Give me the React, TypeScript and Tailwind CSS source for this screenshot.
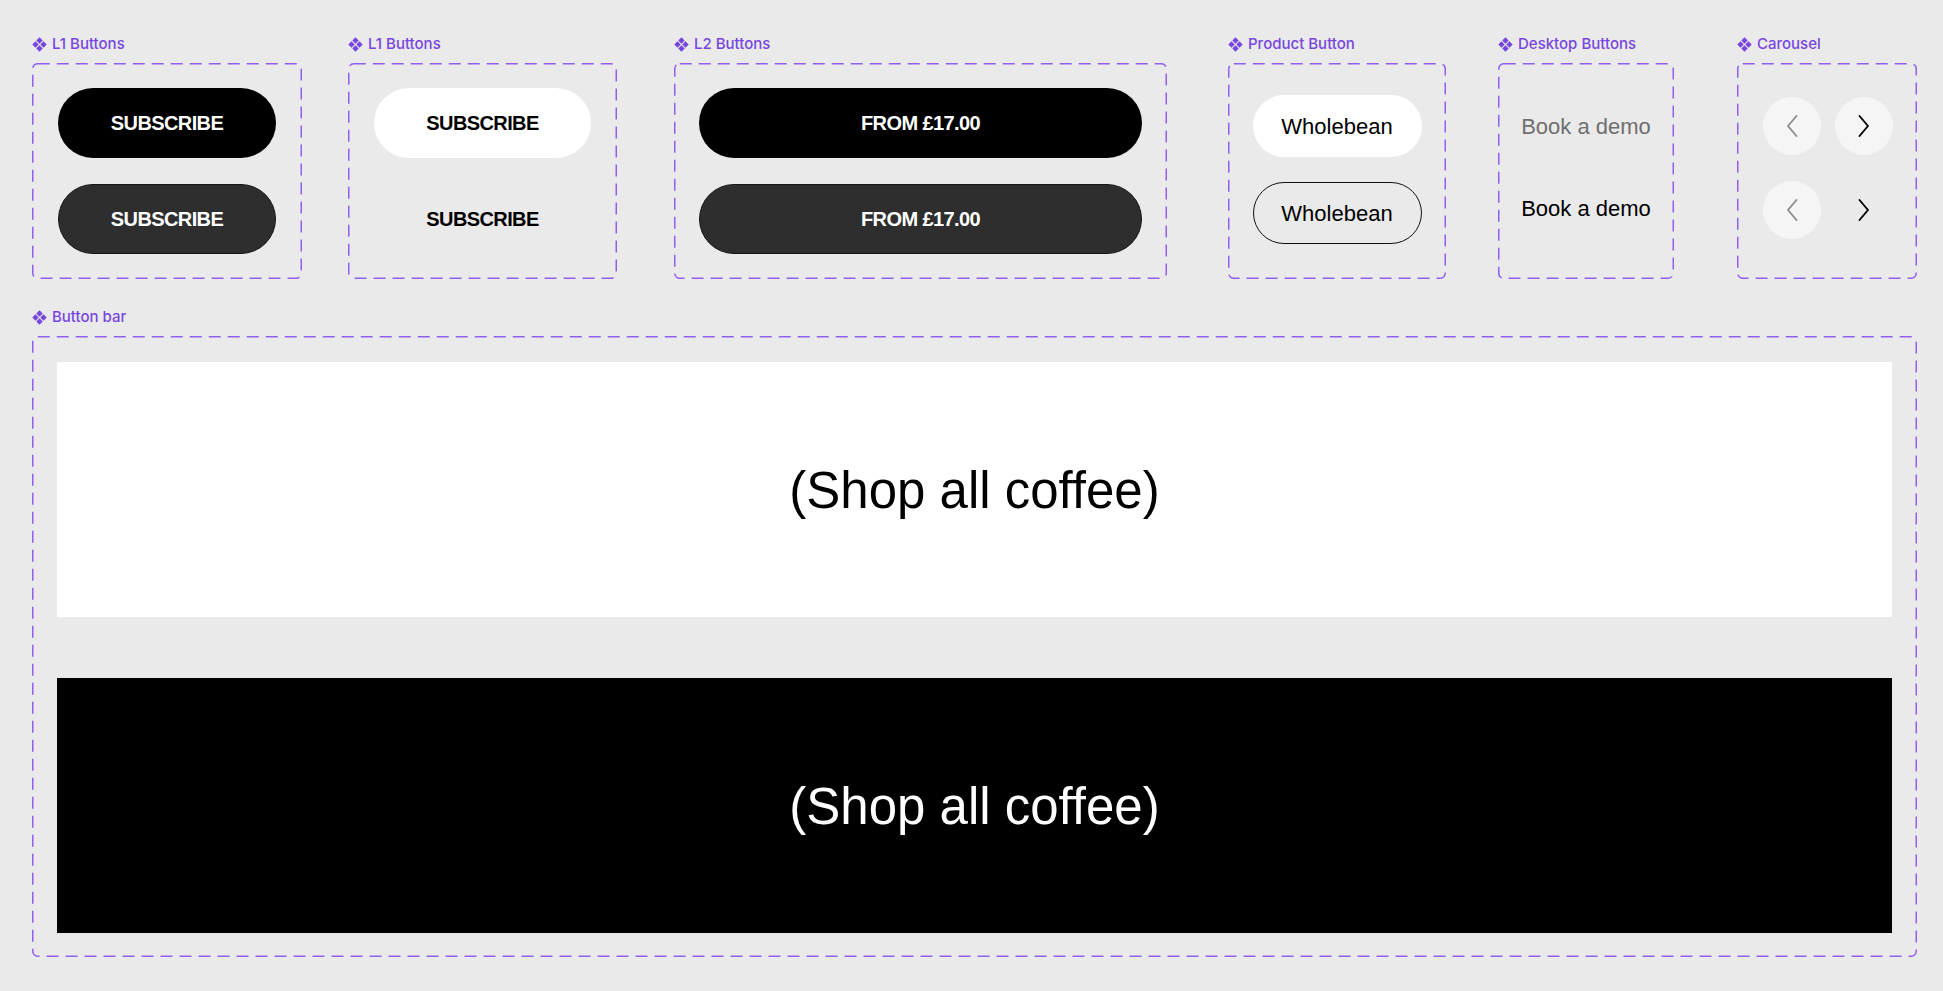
import type { ReactNode } from 'react'
import clsx from 'clsx'

const sans = "font-['Liberation_Sans',Arial,sans-serif]"

// figma-style component marker: four small diamonds
const ComponentIcon = () => (
  <svg width="15" height="15" viewBox="0 0 15 15" fill="currentColor" aria-hidden>
    <path d="M7.5 0.3 L10.7 3.5 L7.5 6.7 L4.3 3.5 Z" />
    <path d="M3.5 4.3 L6.7 7.5 L3.5 10.7 L0.3 7.5 Z" />
    <path d="M11.5 4.3 L14.7 7.5 L11.5 10.7 L8.3 7.5 Z" />
    <path d="M7.5 8.3 L10.7 11.5 L7.5 14.7 L4.3 11.5 Z" />
  </svg>
)

const Label = ({ children }: { children: ReactNode }) => (
  <div className="mb-[11px] flex h-4 items-center gap-[5px] font-['Inter',sans-serif] text-[15px] leading-4 font-medium text-[#7746e0]">
    <ComponentIcon />
    <span>{children}</span>
  </div>
)

const Frame = ({ className, children }: { className?: string; children: ReactNode }) => (
  <div className={clsx('relative', className)}>
    <svg className="pointer-events-none absolute inset-0 h-full w-full" aria-hidden>
      <rect
        x="0.75"
        y="0.75"
        rx="5"
        fill="none"
        stroke="#8f5ff0"
        strokeWidth="1.5"
        strokeDasharray="12 7"
        className="h-[calc(100%-1.5px)] w-[calc(100%-1.5px)]"
      />
    </svg>
    {children}
  </div>
)

const Chevron = ({ dir, className }: { dir: 'left' | 'right'; className?: string }) => (
  <svg width="14" height="24" viewBox="0 0 14 24" fill="none" stroke="currentColor" strokeWidth="1.9" strokeLinecap="round" strokeLinejoin="round" className={className} aria-hidden>
    {dir === 'left' ? <path d="M11.5 2 L3 12 L11.5 22" /> : <path d="M2.5 2 L11 12 L2.5 22" />}
  </svg>
)

const Group = ({ label, className, children }: { label: string; className?: string; children: ReactNode }) => (
  <div className={clsx('flex flex-col', className)}>
    <Label>{label}</Label>
    {children}
  </div>
)

const pill = clsx(sans, 'flex h-[70px] items-center justify-center rounded-full text-[20px] font-bold tracking-[-0.03em]')

export default function App() {
  return (
    <div className="min-h-screen bg-[#eaeaea] pt-[36px] pl-[32px]">
      {/* top row of component sets */}
      <div className="flex items-start">
        <Group label="L1 Buttons">
          <Frame className="flex h-[216px] w-[270px] flex-col items-center justify-center gap-[26px]">
            <div className={clsx(pill, 'w-[218px] bg-black text-white')}>SUBSCRIBE</div>
            <div className={clsx(pill, 'w-[218px] border border-[#161616] bg-[#2e2e2e] text-white')}>SUBSCRIBE</div>
          </Frame>
        </Group>

        <Group label="L1 Buttons" className="ml-[46px]">
          <Frame className="flex h-[216px] w-[269px] flex-col items-center justify-center gap-[26px]">
            <div className={clsx(pill, 'w-[217px] bg-white text-black')}>SUBSCRIBE</div>
            <div className={clsx(pill, 'w-[217px] text-black')}>SUBSCRIBE</div>
          </Frame>
        </Group>

        <Group label="L2 Buttons" className="ml-[57px]">
          <Frame className="flex h-[216px] w-[493px] flex-col items-center justify-center gap-[26px]">
            <div className={clsx(pill, 'w-[443px] bg-black text-white')}>FROM £17.00</div>
            <div className={clsx(pill, 'w-[443px] border border-[#161616] bg-[#2e2e2e] text-white')}>FROM £17.00</div>
          </Frame>
        </Group>

        <Group label="Product Button" className="ml-[61px]">
          <Frame className="flex h-[216px] w-[218px] flex-col items-center gap-[25px] pt-[32px]">
            <div className={clsx(sans, 'flex h-[62px] w-[169px] items-center justify-center rounded-full bg-white text-[22px] text-black')}>
              Wholebean
            </div>
            <div className={clsx(sans, 'flex h-[62px] w-[169px] items-center justify-center rounded-full border-[1.5px] border-[#111] text-[22px] text-black')}>
              Wholebean
            </div>
          </Frame>
        </Group>

        <Group label="Desktop Buttons" className="ml-[52px]">
          <Frame className="flex h-[216px] w-[176px] flex-col items-center gap-[32px] pt-[38px]">
            <div className={clsx(sans, 'flex h-[50px] items-center text-[22px] text-[#6f6f6f]')}>Book a demo</div>
            <div className={clsx(sans, 'flex h-[50px] items-center text-[22px] text-black')}>Book a demo</div>
          </Frame>
        </Group>

        <Group label="Carousel" className="ml-[63px]">
          <Frame className="flex h-[216px] w-[180px] flex-col gap-[26px] pt-[34px] pl-[26px]">
            <div className="flex gap-[14px]">
              <div className="flex h-[58px] w-[58px] items-center justify-center rounded-full bg-[#f5f5f5]">
                <Chevron dir="left" className="text-[#8c8c8c]" />
              </div>
              <div className="flex h-[58px] w-[58px] items-center justify-center rounded-full bg-[#f5f5f5]">
                <Chevron dir="right" className="text-black" />
              </div>
            </div>
            <div className="flex gap-[14px]">
              <div className="flex h-[58px] w-[58px] items-center justify-center rounded-full bg-[#f5f5f5]">
                <Chevron dir="left" className="text-[#8c8c8c]" />
              </div>
              <div className="flex h-[58px] w-[58px] items-center justify-center">
                <Chevron dir="right" className="text-black" />
              </div>
            </div>
          </Frame>
        </Group>
      </div>

      {/* button bar */}
      <Group label="Button bar" className="mt-[30px]">
        <Frame className="flex w-[1885px] flex-col gap-[61px] px-[25px] pt-[26px] pb-[24px]">
          <div className={clsx(sans, 'flex h-[255px] items-center justify-center bg-white pt-[4px] text-[51px] text-black')}>
            (Shop all coffee)
          </div>
          <div className={clsx(sans, 'flex h-[255px] items-center justify-center bg-black pt-[4px] text-[51px] text-white')}>
            (Shop all coffee)
          </div>
        </Frame>
      </Group>
    </div>
  )
}
